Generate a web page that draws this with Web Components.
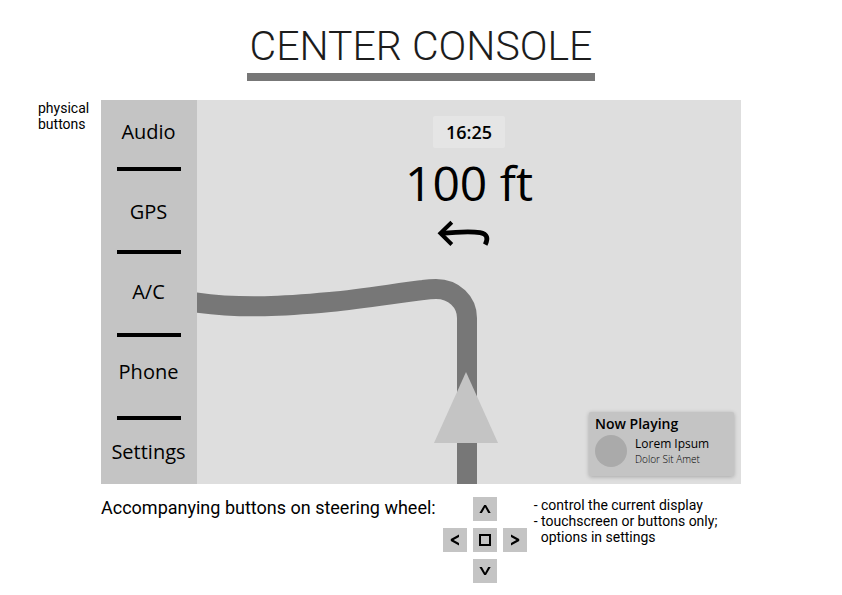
<!DOCTYPE html>
<html lang="en">
<head>
<meta charset="utf-8">
<meta name="viewport" content="width=device-width, initial-scale=1">
<title>Center Console</title>
<style>
body { margin: 0; background: #fff; color: #000; font-family: Roboto, "Liberation Sans", sans-serif; }
</style>
</head>
<body>
<console-page></console-page>
<script>
const define = (name, html) => {
  const template = document.createElement('template');
  template.innerHTML = html;
  customElements.define(name, class extends HTMLElement {
    constructor() {
      super();
      this.attachShadow({ mode: 'open' }).append(template.content.cloneNode(true));
    }
  });
};

define('page-title', `
<style>
:host { display: block; padding: 0 3px 3px; border-bottom: 8px solid #777; }
h1 { margin: 0; font-size: 41px; line-height: 48px; font-weight: 300; color: #1c1c1c; white-space: nowrap; }
</style>
<h1><slot></slot></h1>`);

define('menu-button', `
<style>
:host { display: grid; }
button { border: 0; padding: 0; background: none; color: #000; cursor: pointer;
  font: 20px/28px "Open Sans", "Noto Sans", sans-serif; }
</style>
<button type="button"><slot></slot></button>`);

define('side-menu', `
<style>
:host { display: grid; background: #c4c4c4; }
nav, .rules { grid-area: 1 / 1; display: grid; }
nav { grid-template-rows: repeat(5, 64px); gap: 16px; padding-right: 1px; z-index: 1; }
.rules { grid-auto-rows: 4px; gap: 79px; padding-top: 67px; justify-content: center; align-content: start; }
.rules i { width: 64px; background: #000; }
</style>
<div class="rules" aria-hidden="true"><i></i><i></i><i></i><i></i></div>
<nav aria-label="Physical buttons"><slot></slot></nav>`);

define('clock-chip', `
<style>
:host { display: block; width: 72px; border-radius: 2px; background: #e5e5e5; text-align: center;
  font: 600 18px/32px "Open Sans", "Noto Sans", sans-serif; }
</style>
<time><slot></slot></time>`);

define('turn-guide', `
<style>
:host { display: grid; justify-items: center; }
p { margin: 3px 0 0; font: 48px/64px "Open Sans", "Noto Sans", sans-serif; }
svg { display: block; width: 64px; height: 36px; }
</style>
<p><slot></slot></p>
<svg viewBox="0 0 64 36" fill="none" stroke="#000" role="img" aria-label="Turn left">
<path d="M14.8 7.2 L3.4 18.3 L14.8 29.5" stroke-width="4"/>
<path d="M3.6 18.4 C16 17.2 36 16.4 43 17.6 C50.4 19 51.4 23.5 48.2 29.6" stroke-width="4.8"/>
</svg>`);

define('route-map', `
<style>
:host { display: block; }
svg { display: block; width: 100%; height: 100%; }
</style>
<svg viewBox="0 0 544 384" preserveAspectRatio="xMidYMid slice" role="img" aria-label="Route with a left turn ahead">
<path d="M-4 202 C45 209.5 92 205.8 133 202 C168 198.6 200 193 226 190 C231 189.3 234 189 239 189 C257 189 270 202 270 218 V390" fill="none" stroke="#777" stroke-width="20"/>
<path d="M269 272 L301 343 H237 Z" fill="#c4c4c4"/>
</svg>`);

define('now-playing', `
<style>
:host { display: block; box-sizing: border-box; width: 145px; min-height: 64px; padding: 2px 6px; border-radius: 2px;
  background: #c4c4c4; box-shadow: 0 1px 4px rgba(0,0,0,.25); font-family: "Open Sans", "Noto Sans", sans-serif; }
h2 { margin: 0 0 1px; font-size: 14px; line-height: 20px; font-weight: 600; }
.track { display: flex; gap: 8px; }
.cover { flex: none; width: 32px; height: 32px; border-radius: 50%; background: #aaa; }
p { margin: 0; font-size: 12px; line-height: 18px; white-space: nowrap; }
.artist { font-size: 10px; line-height: 12px; font-weight: 300; }
</style>
<h2>Now Playing</h2>
<div class="track"><span class="cover"></span><div><p><slot name="song"></slot></p><p class="artist"><slot name="artist"></slot></p></div></div>`);

define('nav-display', `
<style>
:host { display: grid; background: #dedede; overflow: hidden; }
route-map, .guide, now-playing { grid-area: 1 / 1; }
route-map { height: 100%; min-height: 384px; }
.guide { display: grid; justify-items: center; align-content: start; padding-top: 16px; }
now-playing { place-self: end; margin: 0 7px 8px; }
</style>
<route-map></route-map>
<div class="guide"><clock-chip>16:25</clock-chip><turn-guide>100 ft</turn-guide></div>
<now-playing><span slot="song">Lorem Ipsum</span><span slot="artist">Dolor Sit Amet</span></now-playing>`);

define('wheel-pad', `
<style>
:host { display: grid; grid-template: repeat(3, 24px) / repeat(3, 24px); gap: 7px 6px; }
button { display: block; border: 0; padding: 0; background: #c4c4c4; cursor: pointer; }
svg { display: block; width: 24px; height: 24px; }
.up { grid-area: 1 / 2; } .left { grid-area: 2 / 1; } .ok { grid-area: 2 / 2; }
.right { grid-area: 2 / 3; } .down { grid-area: 3 / 2; }
</style>
<button type="button" class="up" aria-label="Up"><svg viewBox="0 0 24 24"><path d="M6.4 16 H8.9 L12.1 10.3 L15.2 16 H17.7 L13 8 H11.2 Z"/></svg></button>
<button type="button" class="left" aria-label="Left"><svg viewBox="0 0 24 24"><path d="M16 6.6 V9.1 L10.6 12 L16 14.9 V17.4 L7.8 12.9 V11.1 Z"/></svg></button>
<button type="button" class="ok" aria-label="Select"><svg viewBox="0 0 24 24"><path d="M7 7 H17 V17 H7 Z" fill="none" stroke="#000" stroke-width="2"/></svg></button>
<button type="button" class="right" aria-label="Right"><svg viewBox="0 0 24 24"><path d="M8 6.6 V9.1 L13.4 12 L8 14.9 V17.4 L16.2 12.9 V11.1 Z"/></svg></button>
<button type="button" class="down" aria-label="Down"><svg viewBox="0 0 24 24"><path d="M6.4 8 H8.9 L12.1 13.7 L15.2 8 H17.7 L13 16 H11.2 Z"/></svg></button>`);

define('console-page', `
<style>
:host { display: grid; grid-template-columns: 101px minmax(0, 1fr) 101px; }
page-title { grid-column: 1 / -1; justify-self: center; margin: 22px 0 19px; }
.label { margin: 0 0 0 38px; font-size: 14px; line-height: 16px; }
main { display: grid; grid-template-columns: 96px minmax(0, 1fr); min-height: 384px; }
.wheel { grid-column: 2; display: flex; align-items: start; gap: 7px; padding-top: 13px; }
.wheel p { margin: 0; font-size: 18px; line-height: 22px; white-space: nowrap; }
.notes { margin: 0; padding: 0; list-style: none; font-size: 14px; line-height: 16px; white-space: nowrap; }
.notes li { padding-left: 7px; text-indent: -7px; }
</style>
<page-title>CENTER CONSOLE</page-title>
<p class="label">physical<br>buttons</p>
<main>
<side-menu>
<menu-button>Audio</menu-button><menu-button>GPS</menu-button><menu-button>A/C</menu-button><menu-button>Phone</menu-button><menu-button>Settings</menu-button>
</side-menu>
<nav-display></nav-display>
</main>
<section class="wheel">
<p>Accompanying buttons on steering wheel:</p>
<wheel-pad></wheel-pad>
<ul class="notes"><li>- control the current display</li><li>- touchscreen or buttons only;<br><span>options in settings</span></li></ul>
</section>`);
</script>
</body>
</html>
